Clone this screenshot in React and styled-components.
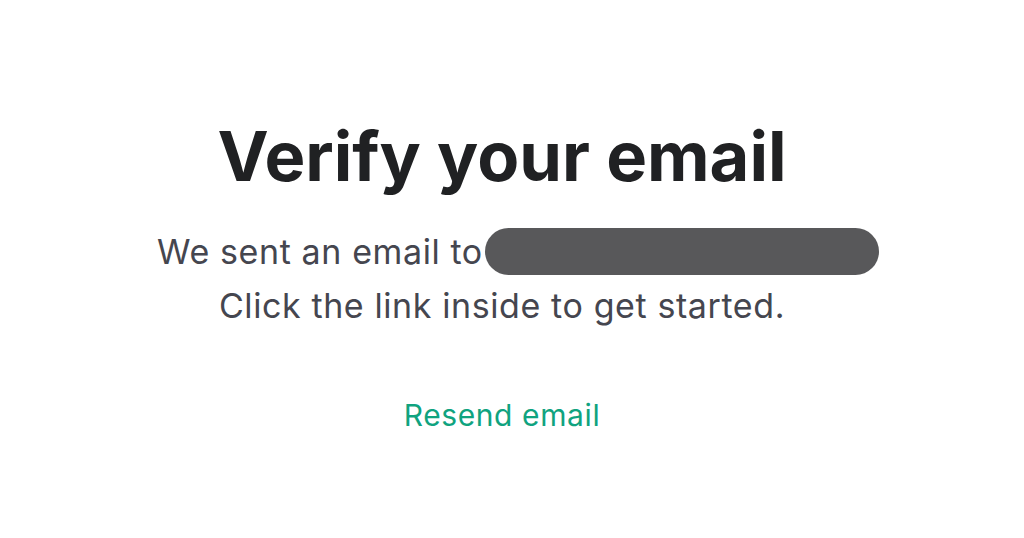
import React from "react";
import styled, { createGlobalStyle } from "styled-components";

const GlobalStyle = createGlobalStyle`
  html, body {
    margin: 0;
    padding: 0;
    background: #fff;
  }
  body {
    font-family: Inter, "Noto Sans", "Liberation Sans", sans-serif;
  }
`;

export default function App() {
  return (
    <>
      <GlobalStyle />
      <Page>
        <Card>
          <Title>Verify your email</Title>
          <Message>
            <Line $shift={32}>
              We sent an email to
              <Redacted aria-hidden="true" />
            </Line>
            <Line>Click the link inside to get started.</Line>
          </Message>
          <ResendButton type="button">Resend email</ResendButton>
        </Card>
      </Page>
    </>
  );
}

const Page = styled.div`
  width: 1024px;
  height: 538px;
  display: flex;
  justify-content: center;
  padding-right: 20px;
  box-sizing: border-box;
  background: #fff;
`;

const Card = styled.div`
  display: flex;
  flex-direction: column;
  align-items: center;
  padding-top: 112px;
`;

const Title = styled.h1`
  margin: 0;
  font-family: Inter, "Liberation Sans", sans-serif;
  font-weight: 700;
  font-size: 68.6px;
  line-height: 90px;
  color: #202123;
`;

const Message = styled.div`
  margin-top: 22px;
  display: flex;
  flex-direction: column;
  align-items: center;
  font-family: Inter, "Noto Sans", sans-serif;
  font-size: 34px;
  letter-spacing: 0.6px;
  color: #45464f;
`;

const Line = styled.div`
  display: flex;
  align-items: center;
  height: 54px;
  padding-left: ${(p) => p.$shift || 0}px;
  white-space: nowrap;
`;

const Redacted = styled.span`
  display: inline-block;
  width: 394px;
  height: 47px;
  margin-left: 2px;
  border-radius: 24px;
  background: #58585a;
`;

const ResendButton = styled.button`
  margin-top: 65px;
  padding: 0;
  border: none;
  background: none;
  cursor: pointer;
  font-family: Inter, "Noto Sans", sans-serif;
  font-size: 30px;
  letter-spacing: 0.6px;
  color: #10a37f;
`;
